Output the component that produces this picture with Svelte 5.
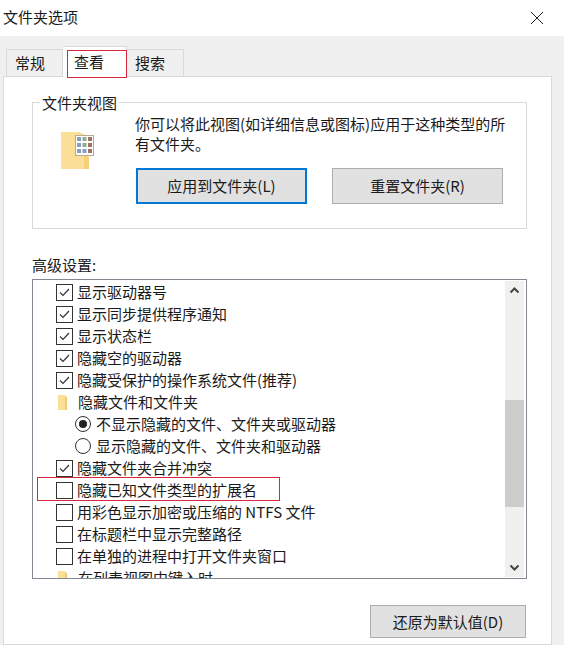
<script>
  const rows = [
    { type: 'check', on: true, text: '显示驱动器号' },
    { type: 'check', on: true, text: '显示同步提供程序通知' },
    { type: 'check', on: true, text: '显示状态栏' },
    { type: 'check', on: true, text: '隐藏空的驱动器' },
    { type: 'check', on: true, text: '隐藏受保护的操作系统文件(推荐)' },
    { type: 'folder', text: '隐藏文件和文件夹' },
    { type: 'radio', on: true, text: '不显示隐藏的文件、文件夹或驱动器' },
    { type: 'radio', on: false, text: '显示隐藏的文件、文件夹和驱动器' },
    { type: 'check', on: true, text: '隐藏文件夹合并冲突' },
    { type: 'check', on: false, text: '隐藏已知文件类型的扩展名', marked: true },
    { type: 'check', on: false, text: '用彩色显示加密或压缩的 NTFS 文件' },
    { type: 'check', on: false, text: '在标题栏中显示完整路径' },
    { type: 'check', on: false, text: '在单独的进程中打开文件夹窗口' },
    { type: 'folder', text: '在列表视图中键入时' }
  ];
</script>

<div class="dialog">
  <header class="titlebar">
    <span>文件夹选项</span>
    <svg class="close" width="14" height="14" viewBox="0 0 14 14">
      <path d="M1 1l12 12M13 1L1 13" stroke="#222" stroke-width="1" fill="none" />
    </svg>
  </header>

  <nav class="tabs">
    <div class="tab first">常规</div>
    <div class="tab active">查看<span class="mark-tab"></span></div>
    <div class="tab">搜索</div>
  </nav>

  <section class="panel">
    <div class="group">
      <div class="legend">文件夹视图</div>
      <div class="group-body">
        <svg class="view-icon" width="30" height="37" viewBox="0 0 30 37">
          <path d="M1 0h18l7 3v34H1z" fill="#fbdf96" />
          <path d="M24 22h5v15h-5z" fill="#f5d27a" />
          <rect x="15.500" y="3.500" width="18" height="20" fill="#fff" stroke="#b5a99a" />
          <g fill="#8a9cc0">
            <rect x="17" y="5" width="4" height="4" />
            <rect x="22.500" y="5" width="4" height="4" fill="#8fae8f" />
            <rect x="28" y="5" width="4" height="4" fill="#a5705f" />
            <rect x="17" y="11" width="4" height="4" />
            <rect x="22.500" y="11" width="4" height="4" fill="#8fae8f" />
            <rect x="28" y="11" width="4" height="4" fill="#a5705f" />
            <rect x="17" y="17" width="4" height="4" />
            <rect x="22.500" y="17" width="4" height="4" />
            <rect x="28" y="17" width="4" height="4" fill="#a5705f" />
          </g>
        </svg>
        <div class="view-main">
          <p>你可以将此视图(如详细信息或图标)应用于这种类型的所有文件夹。</p>
          <div class="view-buttons">
            <button class="btn wide focus">应用到文件夹(L)</button>
            <button class="btn wide">重置文件夹(R)</button>
          </div>
        </div>
      </div>
    </div>

    <div class="adv-label">高级设置:</div>

    <div class="listbox">
      <ul class="rows">
        {#each rows as row}
          <li class="row" class:sub={row.type === 'radio'}>
            {#if row.type === 'check'}
              <span class="box">
                {#if row.on}
                  <svg width="15" height="15" viewBox="0 0 15 15">
                    <path d="M3 7.500l3 3 6-6.500" stroke="#333" stroke-width="1.200" fill="none" />
                  </svg>
                {/if}
              </span>
            {:else if row.type === 'radio'}
              <span class="radio" class:on={row.on}></span>
            {:else}
              <svg class="mini-folder" width="9" height="15" viewBox="0 0 9 15">
                <path d="M0 0h7l2 2v13H0z" fill="#fbdf96" />
                <path d="M7 2h2v13H7z" fill="#efcb75" />
              </svg>
            {/if}
            <span class="row-text">{row.text}</span>
            {#if row.marked}<span class="mark-row"></span>{/if}
          </li>
        {/each}
      </ul>

      <div class="scrollbar">
        <svg width="19" height="19" viewBox="0 0 19 19">
          <path d="M5.500 11.500l4-4 4 4" stroke="#444" stroke-width="2" fill="none" />
        </svg>
        <div class="track">
          <div class="thumb"></div>
        </div>
        <svg width="19" height="19" viewBox="0 0 19 19">
          <path d="M5.500 7.500l4 4 4-4" stroke="#444" stroke-width="2" fill="none" />
        </svg>
      </div>
    </div>

    <div class="footer">
      <button class="btn restore">还原为默认值(D)</button>
    </div>
  </section>
</div>

<style>
  :global(body) {
    margin: 0;
    background: #f0f0f0;
  }

  .dialog {
    width: 564px;
    height: 645px;
    overflow: hidden;
    color: #1a1a1a;
    font-family: "Noto Sans CJK SC", "Liberation Sans", sans-serif;
    font-size: 15px;
    line-height: 22px;
    background: #f0f0f0;
  }

  .titlebar {
    height: 36px;
    box-sizing: border-box;
    padding: 0 20px 2px 3px;
    display: flex;
    align-items: center;
    justify-content: space-between;
    background: #fff;
  }

  .close {
    margin-top: 1px;
  }

  .tabs {
    height: 30px;
    margin-top: 10px;
    padding-left: 6px;
    display: flex;
    align-items: flex-end;
    position: relative;
    z-index: 1;
  }

  .tab {
    height: 27px;
    width: 57px;
    padding-left: 8px;
    box-sizing: border-box;
    line-height: 25px;
    border: 1px solid #d9d9d9;
    border-bottom: 0;
    border-left: 0;
  }

  .tab.first {
    border-left: 1px solid #d9d9d9;
  }

  .tab.active {
    position: relative;
    height: 31px;
    width: 64px;
    padding-left: 11px;
    line-height: 29px;
    background: #fff;
    margin-bottom: -1px;
    border-left: 0;
  }

  .mark-tab {
    position: absolute;
    left: 4px;
    top: 3px;
    width: 60px;
    height: 28px;
    box-sizing: border-box;
    border: 1px solid #d8283f;
  }

  .panel {
    width: 549px;
    height: 569px;
    margin-left: 3px;
    box-sizing: border-box;
    padding: 25px 24px 0 28px;
    background: #fff;
    border: 1px solid #d9d9d9;
  }

  .group {
    height: 127px;
    box-sizing: border-box;
    border: 1px solid #d9d9d9;
  }

  .legend {
    width: max-content;
    margin: -11px 0 0 7px;
    padding: 0 2px;
    background: #fff;
  }

  .group-body {
    display: flex;
  }

  .view-icon {
    margin: 18px 0 0 27px;
    flex: none;
    overflow: visible;
  }

  .view-main {
    margin-left: 45px;
  }

  .view-main p {
    width: 376px;
    margin: 0;
    line-height: 20px;
  }

  .view-buttons {
    display: flex;
    gap: 25px;
    margin-top: 14px;
    margin-left: 1px;
  }

  .btn {
    box-sizing: border-box;
    padding: 0;
    color: #1a1a1a;
    font: inherit;
    background: #e1e1e1;
    border: 1px solid #adadad;
  }

  .btn.wide {
    width: 171px;
    height: 36px;
  }

  .btn.focus {
    border: 2px solid #0078d7;
  }

  .adv-label {
    margin-top: 25px;
  }

  .listbox {
    display: flex;
    justify-content: space-between;
    height: 300px;
    margin-top: 3px;
    box-sizing: border-box;
    overflow: hidden;
    border: 1px solid #828790;
  }

  .rows {
    flex: 1;
    margin: 1px 0 0;
    padding: 0 0 0 23px;
    list-style: none;
  }

  .row {
    position: relative;
    height: 22px;
    display: flex;
    align-items: center;
    white-space: nowrap;
  }

  .row.sub {
    padding-left: 19px;
  }

  .box {
    width: 17px;
    height: 17px;
    margin-right: 4px;
    flex: none;
    box-sizing: border-box;
    background: #fff;
    border: 1px solid #333;
  }

  .box svg {
    display: block;
  }

  .radio {
    position: relative;
    width: 16px;
    height: 16px;
    margin-right: 5px;
    flex: none;
    box-sizing: border-box;
    border: 1px solid #333;
    border-radius: 50%;
  }

  .radio.on::after {
    content: "";
    position: absolute;
    left: 3px;
    top: 3px;
    width: 8px;
    height: 8px;
    background: #222;
    border-radius: 50%;
  }

  .mini-folder {
    margin: 0 11px 0 2px;
    flex: none;
  }

  .mark-row {
    position: absolute;
    left: -19px;
    top: -2px;
    width: 243px;
    height: 24px;
    box-sizing: border-box;
    border: 1px solid #d8283f;
  }

  .scrollbar {
    width: 19px;
    margin: 1px 2px 1px 0;
    display: flex;
    flex-direction: column;
    flex: none;
    background: #f0f0f0;
  }

  .scrollbar svg {
    flex: none;
  }

  .track {
    flex: 1;
    padding-top: 100px;
  }

  .thumb {
    height: 107px;
    background: #cdcdcd;
  }

  .footer {
    display: flex;
    justify-content: flex-end;
    margin: 26px 1px 0 0;
  }

  .btn.restore {
    width: 156px;
    height: 33px;
  }
</style>
